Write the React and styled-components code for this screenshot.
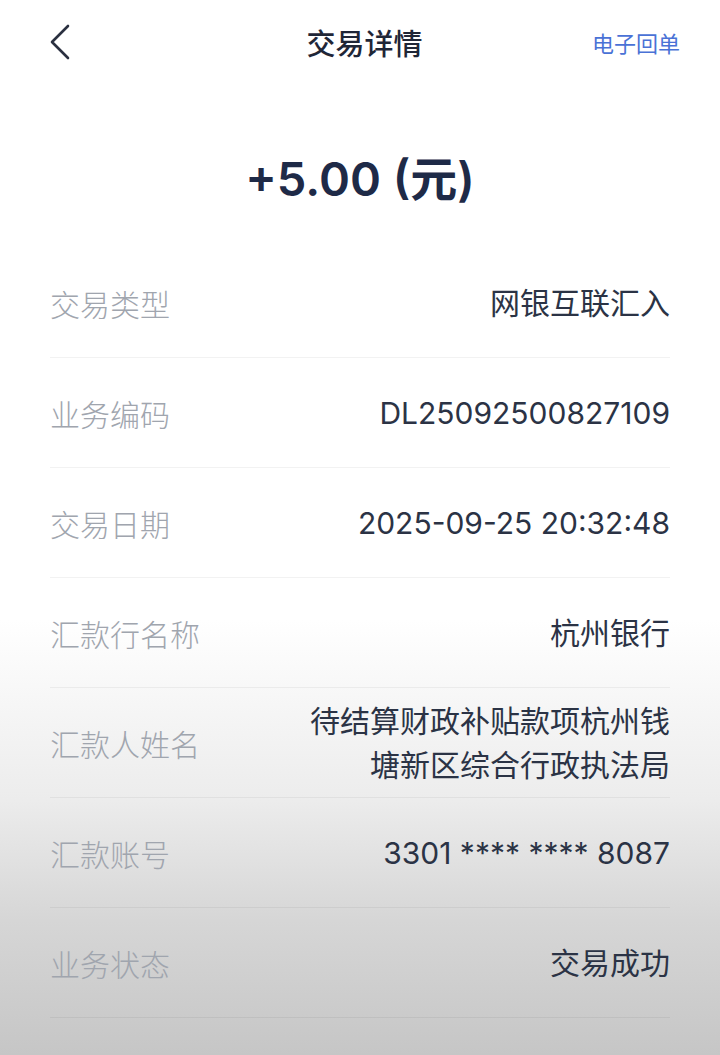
import styled, { createGlobalStyle } from "styled-components";

const GlobalStyle = createGlobalStyle`
  html, body {
    margin: 0;
    padding: 0;
  }
  body {
    font-family: Inter, "Noto Sans CJK SC", sans-serif;
  }
`;

const rows = [
  { label: "交易类型", value: "网银互联汇入" },
  { label: "业务编码", value: "DL25092500827109" },
  { label: "交易日期", value: "2025-09-25 20:32:48" },
  { label: "汇款行名称", value: "杭州银行" },
  { label: "汇款人姓名", value: "待结算财政补贴款项杭州钱塘新区综合行政执法局" },
  { label: "汇款账号", value: "3301 **** **** 8087" },
  { label: "业务状态", value: "交易成功" },
  { label: "附言", value: "财政补贴" },
];

export default function App() {
  return (
    <>
      <GlobalStyle />
      <Page>
        <Header>
          <BackButton aria-label="返回">
            <svg width="24" height="36" viewBox="0 0 24 36" fill="none">
              <polyline
                points="19,2 3,18 19,34"
                stroke="#2a3040"
                strokeWidth="2.6"
                strokeLinecap="round"
                strokeLinejoin="round"
              />
            </svg>
          </BackButton>
          <Title>交易详情</Title>
          <Receipt>电子回单</Receipt>
        </Header>
        <Amount>+5.00 (元)</Amount>
        <List>
          {rows.map((row) => (
            <Row key={row.label}>
              <Label>{row.label}</Label>
              <Value>{row.value}</Value>
            </Row>
          ))}
        </List>
      </Page>
    </>
  );
}

const Page = styled.div`
  height: 1055px;
  overflow: hidden;
  background: linear-gradient(
    to bottom,
    #ffffff 0,
    #ffffff 620px,
    #ececec 800px,
    #d6d6d6 920px,
    #c6c6c6 1055px
  );
`;

const Header = styled.header`
  height: 84px;
  display: grid;
  grid-template-columns: 1fr auto 1fr;
  align-items: center;
  padding: 0 40px 0 49px;
`;

const BackButton = styled.button`
  justify-self: start;
  background: none;
  border: none;
  padding: 0;
  display: flex;
  cursor: pointer;
`;

const Title = styled.h1`
  margin: 0;
  font-size: 29px;
  font-weight: 500;
  color: #1f2637;
  font-family: "Noto Sans CJK SC", sans-serif;
`;

const Receipt = styled.a`
  justify-self: end;
  font-size: 22px;
  color: #4a72d6;
  font-family: "Noto Sans CJK SC", sans-serif;
`;

const Amount = styled.div`
  height: 164px;
  display: flex;
  align-items: center;
  justify-content: center;
  padding-top: 18px;
  box-sizing: border-box;
  font-size: 47px;
  font-weight: 600;
  color: #1e2a47;
`;

const List = styled.div`
  padding: 0 50px;
`;

const Row = styled.div`
  min-height: 110px;
  display: flex;
  align-items: center;
  justify-content: space-between;
  border-bottom: 1px solid rgba(0, 0, 0, 0.05);
  box-sizing: border-box;
`;

const Label = styled.span`
  font-size: 30px;
  font-weight: 300;
  color: #a0a5ae;
  white-space: nowrap;
`;

const Value = styled.span`
  font-size: 30px;
  line-height: 44px;
  color: #2b3345;
  text-align: right;
  max-width: 12.2em;
`;
